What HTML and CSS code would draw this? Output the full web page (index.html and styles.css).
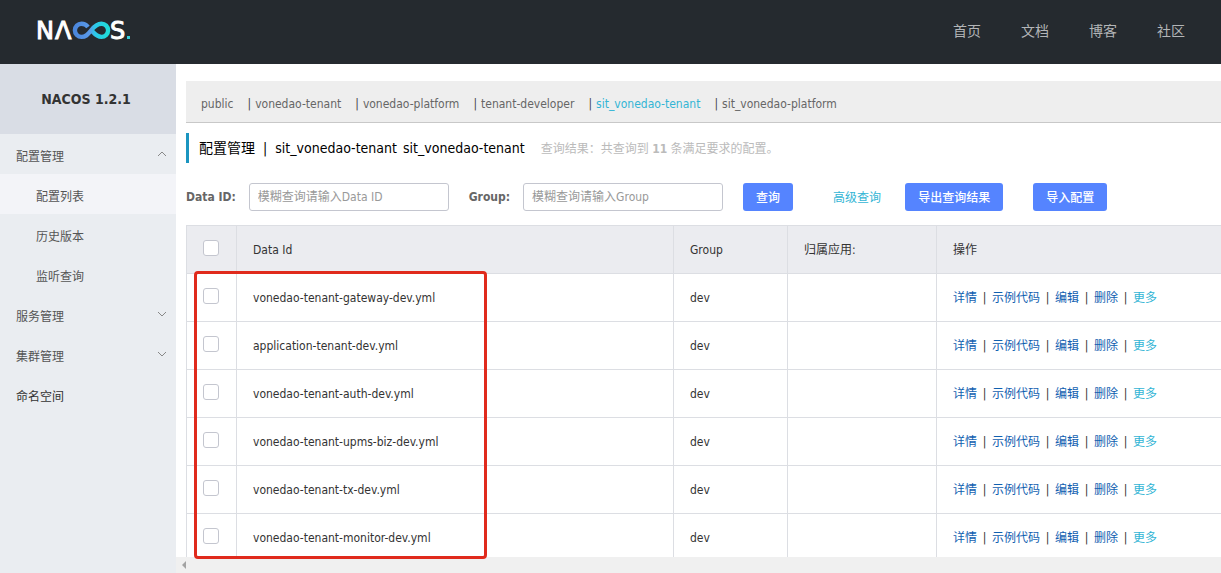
FILE: index.html
```html
<!DOCTYPE html>
<html lang="zh-CN">
<head>
<meta charset="utf-8">
<title>Nacos</title>
<link rel="stylesheet" href="styles.css">
</head>
<body>
<header class="topbar">
  <a class="logo" href="#" aria-label="NACOS">
    <svg width="96" height="32" viewBox="0 -6 96 32">
      <defs>
        <linearGradient id="loop" x1="0" x2="1" y1="0" y2="0">
          <stop offset="0" stop-color="#4b86dc"/>
          <stop offset="0.45" stop-color="#5a9ae8"/>
          <stop offset="0.6" stop-color="#2cc8ea"/>
          <stop offset="1" stop-color="#1fdcd8"/>
        </linearGradient>
      </defs>
      <g class="logo-text">
        <text x="0" y="21">N</text>
        <text x="19" y="21">Λ</text>
        <text x="74" y="21">S</text>
      </g>
      <path d="M52 9 C50 6.500 48 5.700 45.500 5.700 A6.600 6.600 0 0 0 45.500 18.900 C49.500 18.900 51.500 17 55 12.500 C58.500 8 61 5.700 65.500 5.700 A6.600 6.600 0 0 1 65.500 18.900 C62 18.900 60 17.500 56.500 13.500" fill="none" stroke="url(#loop)" stroke-width="4.400"/>
      <rect x="91" y="18" width="3" height="3" fill="#35d0dc"/>
    </svg>
  </a>
  <nav class="topnav">
    <a href="#">首页</a><a href="#">文档</a><a href="#">博客</a><a href="#">社区</a>
  </nav>
</header>
<div class="layout">
  <aside class="sidebar">
    <h1 class="version">NACOS 1.2.1</h1>
    <nav class="menu">
      <a class="item" href="#">配置管理<svg class="arrow" width="10" height="6" viewBox="0 0 10 6"><path d="M1 5 L5 1 L9 5"/></svg></a>
      <a class="item sub selected" href="#">配置列表</a>
      <a class="item sub" href="#">历史版本</a>
      <a class="item sub" href="#">监听查询</a>
      <a class="item" href="#">服务管理<svg class="arrow" width="10" height="6" viewBox="0 0 10 6"><path d="M1 1 L5 5 L9 1"/></svg></a>
      <a class="item" href="#">集群管理<svg class="arrow" width="10" height="6" viewBox="0 0 10 6"><path d="M1 1 L5 5 L9 1"/></svg></a>
      <a class="item dark" href="#">命名空间</a>
    </nav>
  </aside>
  <main class="main">
    <div class="content">
      <nav class="namespaces">
        <a href="#">public</a>
        <span class="bar">|</span><a href="#">vonedao-tenant</a>
        <span class="bar">|</span><a href="#">vonedao-platform</a>
        <span class="bar">|</span><a href="#">tenant-developer</a>
        <span class="bar">|</span><a class="current" href="#">sit_vonedao-tenant</a>
        <span class="bar">|</span><a href="#">sit_vonedao-platform</a>
      </nav>
      <div class="heading">
        <h2 class="title"><span>配置管理</span><span class="title-bar">|</span><span>sit_vonedao-tenant</span><span class="title-id">sit_vonedao-tenant</span></h2>
        <p class="result">查询结果：共查询到 <strong>11</strong> 条满足要求的配置。</p>
      </div>
      <form class="filters">
        <label for="dataid">Data ID:</label>
        <input class="field" id="dataid" type="text" placeholder="模糊查询请输入Data ID">
        <label class="group-label" for="group">Group:</label>
        <input class="field" id="group" type="text" placeholder="模糊查询请输入Group">
        <button class="btn search" type="button">查询</button>
        <a class="advanced" href="#">高级查询</a>
        <button class="btn export" type="button">导出查询结果</button>
        <button class="btn import" type="button">导入配置</button>
      </form>
      <table class="configs">
        <colgroup><col class="c-check"><col class="c-id"><col class="c-group"><col class="c-app"><col></colgroup>
        <thead>
          <tr><th class="check"><input type="checkbox" aria-label="全选"></th><th>Data Id</th><th>Group</th><th>归属应用:</th><th>操作</th></tr>
        </thead>
        <tbody>
          <tr><td class="check"><input type="checkbox" aria-label="vonedao-tenant-gateway-dev.yml"></td><td>vonedao-tenant-gateway-dev.yml</td><td>dev</td><td></td><td><div class="ops"><a href="#">详情</a><span>|</span><a href="#">示例代码</a><span>|</span><a href="#">编辑</a><span>|</span><a href="#">删除</a><span>|</span><a class="more" href="#">更多</a></div></td></tr>
          <tr><td class="check"><input type="checkbox" aria-label="application-tenant-dev.yml"></td><td>application-tenant-dev.yml</td><td>dev</td><td></td><td><div class="ops"><a href="#">详情</a><span>|</span><a href="#">示例代码</a><span>|</span><a href="#">编辑</a><span>|</span><a href="#">删除</a><span>|</span><a class="more" href="#">更多</a></div></td></tr>
          <tr><td class="check"><input type="checkbox" aria-label="vonedao-tenant-auth-dev.yml"></td><td>vonedao-tenant-auth-dev.yml</td><td>dev</td><td></td><td><div class="ops"><a href="#">详情</a><span>|</span><a href="#">示例代码</a><span>|</span><a href="#">编辑</a><span>|</span><a href="#">删除</a><span>|</span><a class="more" href="#">更多</a></div></td></tr>
          <tr><td class="check"><input type="checkbox" aria-label="vonedao-tenant-upms-biz-dev.yml"></td><td>vonedao-tenant-upms-biz-dev.yml</td><td>dev</td><td></td><td><div class="ops"><a href="#">详情</a><span>|</span><a href="#">示例代码</a><span>|</span><a href="#">编辑</a><span>|</span><a href="#">删除</a><span>|</span><a class="more" href="#">更多</a></div></td></tr>
          <tr><td class="check"><input type="checkbox" aria-label="vonedao-tenant-tx-dev.yml"></td><td>vonedao-tenant-tx-dev.yml</td><td>dev</td><td></td><td><div class="ops"><a href="#">详情</a><span>|</span><a href="#">示例代码</a><span>|</span><a href="#">编辑</a><span>|</span><a href="#">删除</a><span>|</span><a class="more" href="#">更多</a></div></td></tr>
          <tr><td class="check"><input type="checkbox" aria-label="vonedao-tenant-monitor-dev.yml"></td><td>vonedao-tenant-monitor-dev.yml</td><td>dev</td><td></td><td><div class="ops"><a href="#">详情</a><span>|</span><a href="#">示例代码</a><span>|</span><a href="#">编辑</a><span>|</span><a href="#">删除</a><span>|</span><a class="more" href="#">更多</a></div></td></tr>
        </tbody>
      </table>
    </div>
    <div class="scrollbar"><svg width="4" height="8" viewBox="0 0 4 8"><path d="M4 0 L0 4 L4 8 Z" fill="#a3a3a3"/></svg></div>
    <div class="highlight"></div>
  </main>
</div>
</body>
</html>
```
FILE: styles.css
```css
* { box-sizing: border-box; }
body {
  margin: 0;
  height: 100vh;
  display: flex;
  flex-direction: column;
  overflow: hidden;
  font: 12px/20px "DejaVu Sans Condensed", "Noto Sans CJK SC", sans-serif;
  color: #333;
  background: #fff;
}
a { color: inherit; text-decoration: none; }

.topbar {
  flex: none;
  height: 64px;
  display: flex;
  align-items: center;
  justify-content: space-between;
  padding: 0 36px;
  background: #252a2f;
}
.logo { display: flex; padding-bottom: 8px; }
.logo-text { font: 24px "DejaVu Sans", sans-serif; fill: #fff; stroke: #fff; }
.topnav { display: flex; gap: 40px; padding-bottom: 2px; font-size: 14px; color: #b3b5b7; }

.layout { flex: 1; min-height: 0; display: flex; }
.sidebar { flex: none; width: 176px; background: #eaedf1; }
.version {
  margin: 0;
  height: 70px;
  text-align: center;
  padding-right: 4px;
  font-size: 14px;
  line-height: 70px;
  background: #d9dde5;
}
.item {
  display: flex;
  align-items: center;
  justify-content: space-between;
  height: 40px;
  padding: 6px 9px 0 16px;
  color: #555;
}
.sub { padding-left: 36px; }
.selected { background: #f3f4f8; }
.dark { color: #333; }
.arrow { margin-bottom: 6px; fill: none; stroke: #888; }

.main {
  position: relative;
  flex: 1;
  min-width: 0;
  display: flex;
  flex-direction: column;
}
.content { flex: 1; min-height: 0; overflow: hidden; padding: 17px 0 0 10px; }
.namespaces {
  display: flex;
  align-items: center;
  height: 42px;
  padding: 4px 15px 0;
  white-space: nowrap;
  color: #666;
  background: #eee;
  border-bottom: 1px solid #c8c8c8;
}
.bar { margin: 0 4px 0 14px; color: #444; }
.current { color: #33b5d5; }

.heading {
  display: flex;
  align-items: center;
  height: 30px;
  margin: 10px 0 20px;
  padding-left: 10px;
  border-left: 3px solid #1b95c0;
  white-space: nowrap;
}
.title { display: flex; margin: 0; font-size: 14px; font-weight: 400; color: #000; }
.title-bar { margin: 0 8px; }
.title-id { margin-left: 6px; }
.result { margin: 0 0 0 16px; padding-top: 2px; color: #bbb; }

.filters { display: flex; align-items: center; height: 28px; margin: 0 0 14px; white-space: nowrap; }
.filters label { font-weight: 700; color: #666; }
.field {
  width: 200px;
  height: 28px;
  margin-left: 13px;
  padding: 0 8px;
  font: inherit;
  border: 1px solid #c4c6cf;
  border-radius: 3px;
}
.field::placeholder { color: #999; }
.group-label { margin-left: 20px; }
.btn {
  height: 28px;
  padding: 2px 13px 0;
  font: inherit;
  font-weight: 500;
  color: #fff;
  background: #5584ff;
  border: 0;
  border-radius: 3px;
}
.search { margin-left: 20px; }
.advanced { margin: 0 24px 0 40px; padding-top: 2px; color: #33b5d5; }
.import { margin-left: 30px; }

.configs {
  width: 100%;
  table-layout: fixed;
  border-spacing: 0;
  border-top: 1px solid #dcdee3;
  border-left: 1px solid #dcdee3;
}
.c-check { width: 50px; }
.c-id { width: 437px; }
.c-group { width: 114px; }
.c-app { width: 149px; }
.configs th, .configs td {
  height: 48px;
  padding: 0 16px;
  text-align: left;
  font-weight: 400;
  border-right: 1px solid #dcdee3;
  border-bottom: 1px solid #dcdee3;
}
.configs th:last-child, .configs td:last-child { border-right: 0; }
.configs th { background: #ebecf0; }
.configs .check { padding-bottom: 4px; }
.check input {
  appearance: none;
  display: block;
  width: 16px;
  height: 16px;
  margin: 0;
  background: #fff;
  border: 1px solid #c4c6cf;
  border-radius: 3px;
}
.ops { display: flex; white-space: nowrap; color: #333; }
.ops a { color: #1060b0; }
.ops span { width: 15px; text-align: center; }
.ops .more { color: #33b5d5; }

.scrollbar { flex: none; height: 16px; display: flex; align-items: center; padding-left: 6px; background: #f0f0f0; }
.highlight {
  position: absolute;
  left: 18px;
  top: 207px;
  width: 293px;
  height: 288px;
  border: 3px solid #e02a1c;
  border-radius: 4px;
  pointer-events: none;
}
```
